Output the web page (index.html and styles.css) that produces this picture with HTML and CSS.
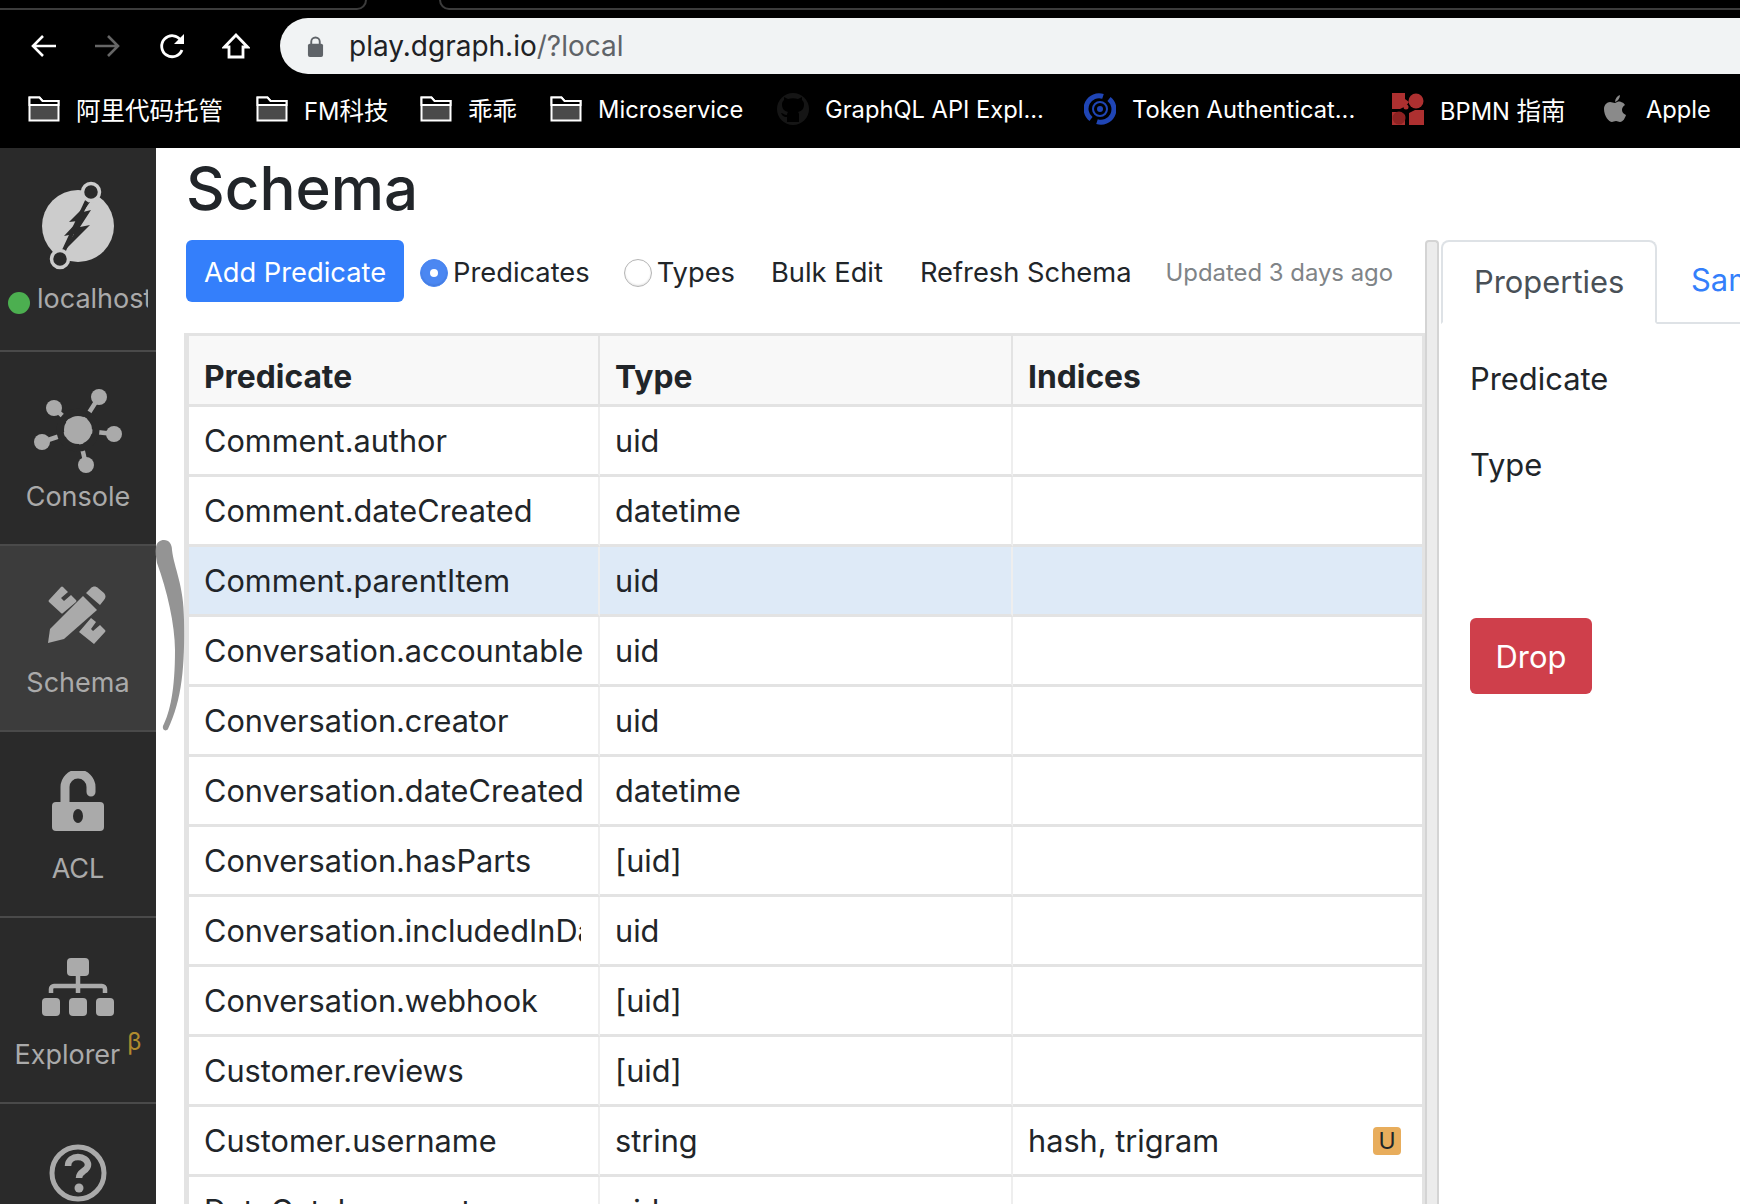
FILE: index.html
```html
<!DOCTYPE html>
<html lang="en">
  <head>
    <meta charset="UTF-8" />
    <meta name="viewport" content="width=device-width, initial-scale=1.0" />
    <title>Dgraph Ratel - Schema</title>
    <link rel="stylesheet" href="styles.css">
  </head>
  <body>
    <div class="browser">
      <div class="tab-strip">
        <div class="tab-line tab-line-left"></div>
        <div class="tab-line tab-line-right"></div>
      </div>
      <div class="nav-row">
        <svg class="nav-icon" viewBox="0 0 28 28"><path d="M26 14H3M13 4 3 14l10 10" fill="none" stroke="#fff" stroke-width="2.6"/></svg>
        <svg class="nav-icon nav-forward" viewBox="0 0 28 28"><path d="M2 14h23M15 4l10 10-10 10" fill="none" stroke="#666" stroke-width="2.6"/></svg>
        <svg class="nav-icon nav-reload" viewBox="0 0 28 28"><path d="M23 18a10.5 10.5 0 1 1-1-9.500" fill="none" stroke="#fff" stroke-width="2.8"/><path d="M25 2v10H15z" fill="#fff"/></svg>
        <svg class="nav-icon nav-home" viewBox="0 0 28 28"><path d="M14 3 2.500 15H7v10h14V15h4.500z" fill="none" stroke="#fff" stroke-width="2.8"/></svg>
        <div class="url-bar">
          <svg class="lock" viewBox="0 0 18 24"><path d="M4.500 10V7a4.500 4.500 0 0 1 9 0v3" fill="none" stroke="#5f6368" stroke-width="2"/><rect x="1" y="9" width="16" height="14" rx="2" fill="#5f6368"/></svg>
          <span class="url-host">play.dgraph.io</span><span class="url-path">/?local</span>
        </div>
      </div>
      <div class="bookmarks">
        <div class="bookmark b1">
          <svg class="folder" viewBox="0 0 32 26"><use href="#folder-shape"/></svg>
          <span class="cjk">阿里代码托管</span>
        </div>
        <div class="bookmark b2">
          <svg class="folder" viewBox="0 0 32 26"><use href="#folder-shape"/></svg>
          <span>FM<span class="cjk">科技</span></span>
        </div>
        <div class="bookmark b3">
          <svg class="folder" viewBox="0 0 32 26"><use href="#folder-shape"/></svg>
          <span class="cjk">乖乖</span>
        </div>
        <div class="bookmark b4">
          <svg class="folder" viewBox="0 0 32 26"><use href="#folder-shape"/></svg>
          <span>Microservice</span>
        </div>
        <div class="bookmark b5">
          <svg class="site-icon" viewBox="0 0 32 32"><circle cx="16" cy="16" r="16" fill="#151515"/><path d="M10 29v-5c-4 0-5-2-6-4 2 0 3 2 6 2 0-2 1-3 1-3-4-1-6-3-6-8 0-2 1-3 2-4V4l4 2c3-1 7-1 10 0l4-2v3c1 1 2 2 2 4 0 5-2 7-6 8 1 1 1 2 1 3v7z" fill="#000"/></svg>
          <span>GraphQL API Expl...</span>
        </div>
        <div class="bookmark b6">
          <svg class="site-icon" viewBox="0 0 32 32"><path d="M7 26A13 13 0 0 1 19 3.400M25 6A13 13 0 0 1 13 28.600" fill="none" stroke="#1f45b5" stroke-width="5"/><circle cx="16" cy="16" r="7" fill="none" stroke="#1f45b5" stroke-width="2"/><circle cx="16" cy="16" r="3" fill="#1f45b5"/></svg>
          <span>Token Authenticat...</span>
        </div>
        <div class="bookmark b7">
          <svg class="site-icon" viewBox="0 0 32 32"><path d="M0 0h13v6l4 3-3 4-6 3H0zM0 19h8l5 3v10H0zM17 20l6-3h9v15H17z" fill="#ad3030"/><circle cx="24" cy="8" r="7.500" fill="#ad3030"/><circle cx="7" cy="25" r="6.500" fill="#8e2222"/><circle cx="14" cy="14" r="2.500" fill="#ad3030"/></svg>
          <span>BPMN <span class="cjk">指南</span></span>
        </div>
        <div class="bookmark b8">
          <svg class="apple-icon" viewBox="0 0 22 28"><path d="M11 8c2-1 4-2 6-1 2 .4 3 1.500 4 3-2 1-3 3-3 5 0 2 1.500 4 4 5-1 3-3 7-6 7-1.500 0-2.500-1-4-1s-3 1-4 1c-3 0-8-6-8-13 0-4 3-7 6-7 2 0 3 1 5 1z" fill="#8a8a8a"/><path d="M11 7c0-3 2-6 5-7 0 3-2 6-5 7z" fill="#8a8a8a"/></svg>
          <span>Apple</span>
        </div>
      </div>
    </div>

    <svg class="defs" width="0" height="0">
      <symbol id="folder-shape" viewBox="0 0 32 26">
        <path d="M1.500 24.500V1.500h10l3 3.500h16v19.500z" fill="#4a4a4a" stroke="#fff" stroke-width="2"/>
        <path d="M1.500 9h29V5h-16l-3-3.500h-10z" fill="#000" stroke="#fff" stroke-width="2"/>
      </symbol>
    </svg>

    <div class="app">
      <nav class="sidebar">
        <div class="side-item side-server">
          <svg class="logo" viewBox="0 0 90 90">
            <circle cx="45" cy="45" r="36" fill="#ccc"/>
            <path d="M58 11 27 78" stroke="#2a2a2a" stroke-width="4"/>
            <polygon points="59,18 36,41 45,40 31,55 41,53 27,74 57,44 47,46 58,29 50,31" fill="#2a2a2a"/>
            <circle cx="58" cy="11" r="8.500" fill="#2a2a2a" stroke="#ccc" stroke-width="3.500"/>
            <circle cx="27" cy="78" r="8.500" fill="#2a2a2a" stroke="#ccc" stroke-width="3.500"/>
          </svg>
          <div class="server-label">
            <span class="status-dot"></span>
            <span class="server-name">localhost</span>
          </div>
        </div>
        <div class="side-item side-console">
          <svg class="console-icon" viewBox="0 0 88 88">
            <g stroke="#aaa" stroke-width="4.500">
              <path d="M44 44 65 11M44 44 20 22M44 44 8 56M44 44 80 48M44 44 52 79"/>
            </g>
            <g stroke="#2a2a2a" stroke-width="7" fill="none">
              <circle cx="44" cy="44" r="18"/>
            </g>
            <circle cx="44" cy="44" r="14" fill="#aaa"/>
            <circle cx="65" cy="11" r="8" fill="#aaa"/>
            <circle cx="20" cy="22" r="8" fill="#aaa"/>
            <circle cx="8" cy="56" r="8" fill="#aaa"/>
            <circle cx="80" cy="48" r="8" fill="#aaa"/>
            <circle cx="52" cy="79" r="8" fill="#aaa"/>
          </svg>
          <span>Console</span>
        </div>
        <div class="side-item active">
          <svg class="side-icon" viewBox="0 -1 60 60">
            <path d="M1 14 13 1q1-1 2 0l5 5-7 6 3 3 7-6 5 5q1 1 0 2L15 27q-1 1-2 0L1 16q-1-1 0-2z" fill="#aaa"/>
            <path d="M31 46 43 32l5 4-5 7 2 2 7-6 5 5q1 1 0 2L46 58z" fill="#aaa"/>
            <path d="M0 57 2 43 35 10 49 24 16 53z" fill="#aaa"/>
            <path d="M38 7l5-5c2-2 5-2 7 0l6 5c2 2 2 5 0 7l-4 5z" fill="#aaa"/>
          </svg>
          <span>Schema</span>
        </div>
        <div class="side-item">
          <svg class="side-icon" viewBox="0 0 52 60">
            <path d="M13 32V16a13 13 0 0 1 26 0v5" fill="none" stroke="#aaa" stroke-width="9" stroke-linecap="round"/>
            <rect x="0" y="31" width="52" height="29" rx="4" fill="#aaa"/>
            <ellipse cx="26" cy="45" rx="5" ry="7" fill="#2a2a2a"/>
          </svg>
          <span>ACL</span>
        </div>
        <div class="side-item">
          <svg class="side-icon" viewBox="0 0 72 60">
            <rect x="25" y="1" width="22" height="18" rx="4" fill="#aaa"/>
            <path d="M36 18v18M9 36v-4a3 3 0 0 1 3-3h48a3 3 0 0 1 3 3v4" fill="none" stroke="#aaa" stroke-width="4.500"/>
            <rect x="0" y="41" width="18" height="18" rx="4" fill="#aaa"/>
            <rect x="27" y="41" width="18" height="18" rx="4" fill="#aaa"/>
            <rect x="54" y="41" width="18" height="18" rx="4" fill="#aaa"/>
          </svg>
          <span>Explorer<sup class="beta">β</sup></span>
        </div>
        <div class="side-item">
          <svg class="side-icon" viewBox="0 0 60 60">
            <circle cx="30" cy="30" r="26" fill="none" stroke="#aaa" stroke-width="5"/>
            <path d="M20 23c0-6 5-9 10-9s10 3 10 8c0 6-9 6-9 13" fill="none" stroke="#aaa" stroke-width="6.500"/>
            <circle cx="31" cy="45" r="4.500" fill="#aaa"/>
          </svg>
        </div>
      </nav>

      <svg class="scribble" viewBox="0 0 32 192"><path d="M1 7C2 2 5 0 9 0 14 0 17 4 17 10 19 28 29 45 29 80 30 125 27 160 13 189 11 192 7 190 8 186 15 172 20 150 20 110 20 85 12 50 2 23 1 17 0 12 1 7z" fill="#949494"/></svg>

      <main class="schema-pane">
        <h1 class="title">Schema</h1>
        <div class="toolbar">
          <button class="btn-add">Add Predicate</button>
          <label class="radio-label radio-first"><span class="radio checked"></span>Predicates</label>
          <label class="radio-label radio-second"><span class="radio"></span>Types</label>
          <a class="tool-link link-bulk">Bulk Edit</a>
          <a class="tool-link link-refresh">Refresh Schema</a>
          <span class="updated">Updated 3 days ago</span>
        </div>
        <div class="table-wrap">
          <table class="schema-table">
            <thead>
              <tr><th class="col-predicate">Predicate</th><th class="col-type">Type</th><th>Indices</th></tr>
            </thead>
            <tbody>
              <tr><td>Comment.author</td><td>uid</td><td></td></tr>
              <tr><td>Comment.dateCreated</td><td>datetime</td><td></td></tr>
              <tr class="selected"><td>Comment.parentItem</td><td>uid</td><td></td></tr>
              <tr><td>Conversation.accountable</td><td>uid</td><td></td></tr>
              <tr><td>Conversation.creator</td><td>uid</td><td></td></tr>
              <tr><td>Conversation.dateCreated</td><td>datetime</td><td></td></tr>
              <tr><td>Conversation.hasParts</td><td>[uid]</td><td></td></tr>
              <tr><td><div class="cell-clip">Conversation.includedInDataCatalog</div></td><td>uid</td><td></td></tr>
              <tr><td>Conversation.webhook</td><td>[uid]</td><td></td></tr>
              <tr><td>Customer.reviews</td><td>[uid]</td><td></td></tr>
              <tr><td>Customer.username</td><td>string</td><td>hash, trigram<span class="badge">U</span></td></tr>
              <tr><td>DataCatalog.event</td><td>uid</td><td></td></tr>
            </tbody>
          </table>
        </div>
      </main>

      <div class="splitter"></div>

      <aside class="props">
        <div class="tabs">
          <div class="tab current">Properties</div>
          <div class="tab">Samples</div>
        </div>
        <div class="prop-body">
          <div class="prop-name">Predicate</div>
          <div class="prop-name prop-type">Type</div>
          <button class="btn-drop">Drop</button>
        </div>
      </aside>
    </div>
  </body>
</html>
```
FILE: styles.css
```css
* {
  box-sizing: border-box;
}

html,
body {
  margin: 0;
  height: 1204px;
  overflow: hidden;
  background-color: #fff;
}

body {
  font-family: Inter, "Noto Sans CJK SC", sans-serif;
  color: #212529;
  position: relative;
}

.defs {
  position: absolute;
}

/* browser chrome */
.browser {
  height: 148px;
  background-color: #000;
  overflow: hidden;
}

.tab-strip {
  height: 18px;
  display: flex;
  justify-content: space-between;
}

.tab-line {
  height: 10px;
  border-bottom: 2px solid #3c3c3c;
}

.tab-line-left {
  width: 367px;
  border-right: 2px solid #3c3c3c;
  border-bottom-right-radius: 10px;
}

.tab-line-right {
  width: 1301px;
  border-left: 2px solid #3c3c3c;
  border-bottom-left-radius: 10px;
}

.nav-row {
  height: 56px;
  display: flex;
  align-items: center;
  padding-left: 30px;
}

.nav-icon {
  width: 28px;
  height: 28px;
  flex: none;
}

.nav-forward {
  margin-left: 35px;
}

.nav-reload {
  margin-left: 38px;
}

.nav-home {
  margin-left: 35px;
}

.url-bar {
  margin-left: 30px;
  flex: 1;
  height: 56px;
  background-color: #f1f3f4;
  border-radius: 28px 0 0 28px;
  display: flex;
  align-items: center;
  padding-left: 27px;
  font-size: 28px;
}

.lock {
  width: 17px;
  height: 23px;
  margin-right: 25px;
}

.url-host {
  color: #202124;
}

.url-path {
  color: #5f6368;
}

.bookmarks {
  height: 70px;
  display: flex;
  align-items: center;
  padding-left: 28px;
  color: #fff;
  font-size: 23.700px;
}

.cjk {
  font-size: 24.500px;
}

.bookmark {
  display: flex;
  align-items: center;
  white-space: nowrap;
  flex: none;
}

.folder {
  width: 32px;
  height: 26px;
  margin-right: 16px;
}

.site-icon {
  width: 32px;
  height: 32px;
  margin-right: 16px;
}

.apple-icon {
  width: 22px;
  height: 28px;
  margin-right: 20px;
}

.b1 {
  width: 228px;
}

.b2 {
  width: 164px;
}

.b3 {
  width: 130px;
}

.b4 {
  width: 227px;
}

.b5 {
  width: 307px;
}

.b6 {
  width: 308px;
}

.b7 {
  width: 212px;
}

/* layout */
.app {
  display: flex;
  height: 1056px;
  position: relative;
  overflow: hidden;
}

/* sidebar */
.sidebar {
  width: 156px;
  flex: none;
  background-color: #2a2a2a;
  color: #aaa;
  font-size: 27px;
  overflow: hidden;
}

.side-item {
  height: 186px;
  border-bottom: 2px solid #4a4a4a;
  display: flex;
  flex-direction: column;
  align-items: center;
  justify-content: flex-end;
  padding-bottom: 29px;
  line-height: 36px;
}

.side-item.active {
  background-color: #3c3c3c;
}

.side-item:last-child {
  justify-content: flex-start;
  padding-top: 39px;
  border-bottom: none;
}

.side-icon {
  height: 60px;
  margin-bottom: 20px;
}

.side-server {
  height: 204px;
  padding-bottom: 33px;
}

.logo {
  width: 90px;
  height: 90px;
  margin-bottom: 10px;
}

.server-label {
  width: 100%;
  display: flex;
  align-items: center;
  padding-left: 8px;
}

.status-dot {
  width: 22px;
  height: 22px;
  border-radius: 50%;
  background-color: #4caf50;
  flex: none;
  margin-right: 7px;
  margin-top: 8px;
}

.server-name {
  display: block;
  width: 111px;
  overflow: hidden;
  white-space: nowrap;
}

.side-console {
  height: 194px;
}

.console-icon {
  width: 88px;
  height: 88px;
  margin-bottom: 5px;
}

.beta {
  color: #b08a2e;
  font-size: 24px;
  margin-left: 7px;
  vertical-align: 14px;
  line-height: 0;
}

.scribble {
  position: absolute;
  left: 155px;
  top: 392px;
  width: 32px;
  height: 192px;
}

/* schema pane */
.schema-pane {
  width: 1269px;
  flex: none;
  padding-left: 28px;
}

.title {
  margin: 0;
  font-size: 60px;
  font-weight: 500;
  height: 92px;
  line-height: 80px;
  padding-left: 2px;
}

.toolbar {
  height: 62px;
  display: flex;
  align-items: center;
  padding: 2px 0 0 2px;
  font-size: 27.300px;
  white-space: nowrap;
}

.btn-add {
  width: 218px;
  height: 62px;
  margin-top: -2px;
  border: none;
  border-radius: 6px;
  background-color: #347ffb;
  color: #fff;
  font-family: inherit;
  font-size: 27.300px;
  padding: 2px 0 0;
  flex: none;
}

.radio-label {
  display: flex;
  align-items: center;
}

.radio-first {
  margin-left: 16px;
}

.radio-second {
  margin-left: 34px;
}

.radio {
  width: 28px;
  height: 28px;
  border-radius: 50%;
  background-color: #fff;
  border: 1px solid #b5b5b5;
  box-shadow: inset 0 -1px 2px rgba(0, 0, 0, 0.12);
  margin-right: 5px;
  margin-top: 2px;
  position: relative;
}

.radio.checked {
  background-color: #4b87f2;
  border-color: #4b87f2;
}

.radio.checked::after {
  content: "";
  position: absolute;
  left: 9px;
  top: 9px;
  width: 8px;
  height: 8px;
  border-radius: 50%;
  background-color: #fff;
}

.link-bulk {
  margin-left: 36px;
}

.link-refresh {
  margin-left: 37px;
}

.updated {
  margin-left: 34px;
  font-size: 23.900px;
  color: #808487;
}

.table-wrap {
  margin-top: 31px;
  width: 1241px;
  border: solid #e3e3e3;
  border-width: 3px 3px 0 5px;
}

.schema-table {
  border-collapse: separate;
  border-spacing: 0;
  table-layout: fixed;
  width: 1233px;
  font-size: 30.700px;
}

.schema-table th,
.schema-table td {
  height: 70px;
  padding: 0 14px 0 15px;
  text-align: left;
  white-space: nowrap;
  overflow: hidden;
  border-bottom: 3px solid #e3e3e3;
  border-right: 2px solid #eee;
}

.schema-table th {
  height: 71px;
  background-color: #f8f8f8;
  font-size: 31.800px;
  font-weight: 700;
  border-right-color: #e3e3e3;
  padding-top: 12px;
}

.schema-table .col-predicate {
  width: 411px;
}

.schema-table .col-type {
  width: 413px;
}

.schema-table tr td:last-child,
.schema-table tr th:last-child {
  border-right: none;
}

.cell-clip {
  overflow: hidden;
  margin-right: 3px;
}

.selected td {
  background-color: #deeaf7;
}

.badge {
  float: right;
  width: 28px;
  height: 28px;
  line-height: 28px;
  margin: 5px 7px 0 0;
  border-radius: 4px;
  background-color: #e8ad5c;
  font-size: 23px;
  text-align: center;
}

/* splitter */
.splitter {
  width: 14px;
  flex: none;
  margin-top: 92px;
  background-color: #ececec;
  border: solid #d4d4d4;
  border-width: 0 2px;
  border-top-width: 2px;
  border-radius: 4px 4px 0 0;
}

/* right panel */
.props {
  flex: 1;
  padding: 92px 0 0 2px;
  overflow: hidden;
}

.tabs {
  display: flex;
  height: 84px;
  font-size: 30.900px;
  border-bottom: 2px solid #dee2e6;
}

.tab {
  padding: 0 34px;
  line-height: 80px;
  color: #347ffb;
  white-space: nowrap;
  flex: none;
}

.tab.current {
  width: 216px;
  height: 84px;
  color: #495057;
  background-color: #fff;
  border: 2px solid #dee2e6;
  border-bottom-color: #fff;
  border-radius: 8px 8px 0 0;
  padding: 0 0 0 31px;
}

.prop-body {
  padding-left: 29px;
  font-size: 30.900px;
}

.prop-name {
  margin-top: 37px;
  height: 36px;
  line-height: 36px;
}

.prop-type {
  margin-top: 50px;
}

.btn-drop {
  display: block;
  margin-top: 135px;
  width: 122px;
  height: 76px;
  border: none;
  border-radius: 6px;
  background-color: #cf3f4b;
  color: #fff;
  font-family: inherit;
  font-size: 30.900px;
}
```
